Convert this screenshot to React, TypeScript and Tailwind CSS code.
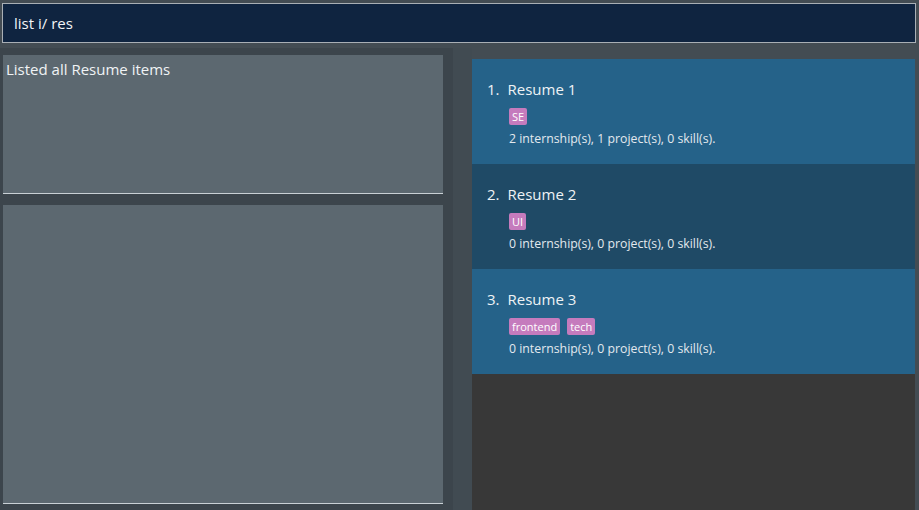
import React from 'react';

interface ResumeCardProps {
  index: number;
  name: string;
  tags: string[];
  summary: string;
}

function ResumeCard({ index, name, tags, summary }: ResumeCardProps) {
  const bg = index % 2 === 1 ? 'bg-[#256289]' : 'bg-[#1f4a66]';
  return (
    <div className={`${bg} h-[105px] pl-[15px] pt-[20px]`}>
      <div className="flex items-center text-[15px] leading-[20px] font-medium text-[#eef2f5]">
        <span className="mr-[8px]">{index}.</span>
        <span>{name}</span>
      </div>
      <div className="flex gap-[7px] ml-[22px] mt-[9px]">
        {tags.map((tag) => (
          <span
            key={tag}
            className="bg-[#c57bbd] text-white text-[11px] leading-[17px] px-[3px] rounded-[2px]"
          >
            {tag}
          </span>
        ))}
      </div>
      <div className="ml-[22px] mt-[5px] text-[12.3px] leading-[18px] text-[#e3e9ee]">
        {summary}
      </div>
    </div>
  );
}

export default function App() {
  const resumes = [
    { name: 'Resume 1', tags: ['SE'], summary: '2 internship(s), 1 project(s), 0 skill(s).' },
    { name: 'Resume 2', tags: ['UI'], summary: '0 internship(s), 0 project(s), 0 skill(s).' },
    { name: 'Resume 3', tags: ['frontend', 'tech'], summary: '0 internship(s), 0 project(s), 0 skill(s).' },
  ];

  return (
    <div className="w-[919px] h-[510px] bg-[#434c53] flex flex-col font-['Open_Sans',sans-serif] overflow-hidden">
      {/* command box */}
      <div className="pt-[3px] pl-[2px] pr-[3px]">
        <div className="h-[40px] border border-[#a9afb5] bg-[#0f2440] flex items-center pl-[11px] text-[15px] text-[#f2f4f6]">
          list i/ res
        </div>
      </div>

      <div className="flex flex-1 mt-[5px] min-h-0">
        {/* left side */}
        <div className="w-[453px] bg-[#3c454c] flex flex-col pl-[3px] pr-[10px] pt-[7px] pb-[6px]">
          <div className="h-[139px] bg-[#5c6870] border-b border-[#c9d0d5] px-[3px] pt-[3px] text-[15px] leading-[22px] text-[#f0f3f5]">
            Listed all Resume items
          </div>
          <div className="flex-1 mt-[11px] bg-[#5c6870] border-b border-[#c9d0d5]" />
        </div>

        {/* divider */}
        <div className="w-[19px] bg-[#414b52]" />

        {/* resume list */}
        <div className="w-[443px] mt-[11px] bg-[#383838] flex flex-col">
          {resumes.map((r, i) => (
            <ResumeCard key={r.name} index={i + 1} name={r.name} tags={r.tags} summary={r.summary} />
          ))}
        </div>
      </div>
    </div>
  );
}
